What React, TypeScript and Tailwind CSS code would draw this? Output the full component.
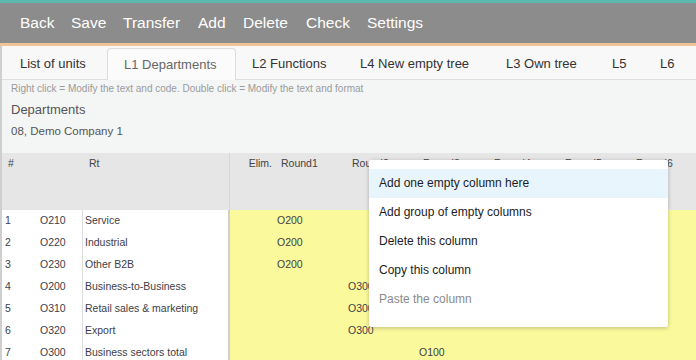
import React from "react";

const menu = [
  { label: "Back", w: "w-[51px]" },
  { label: "Save", w: "w-[52px]" },
  { label: "Transfer", w: "w-[75px]" },
  { label: "Add", w: "w-[45px]" },
  { label: "Delete", w: "w-[63px]" },
  { label: "Check", w: "w-[61px]" },
  { label: "Settings", w: "w-auto" },
];

const tabs = [
  { label: "List of units", w: "w-[103px]" },
  { label: "L1 Departments", w: "w-[129px]", active: true },
  { label: "L2 Functions", w: "w-[108px]" },
  { label: "L4 New empty tree", w: "w-[146px]" },
  { label: "L3 Own tree", w: "w-[106px]" },
  { label: "L5", w: "w-[48px]" },
  { label: "L6", w: "w-[48px]" },
];

const rows = [
  { n: 1, code: "O210", name: "Service", col: 0, val: "O200" },
  { n: 2, code: "O220", name: "Industrial", col: 0, val: "O200" },
  { n: 3, code: "O230", name: "Other B2B", col: 0, val: "O200" },
  { n: 4, code: "O200", name: "Business-to-Business", col: 1, val: "O300" },
  { n: 5, code: "O310", name: "Retail sales & marketing", col: 1, val: "O300" },
  { n: 6, code: "O320", name: "Export", col: 1, val: "O300" },
  { n: 7, code: "O300", name: "Business sectors total", col: 2, val: "O100" },
];

const rounds = ["Round1", "Round2", "Round3", "Round4", "Round5", "Round6"];

const contextItems = [
  { label: "Add one empty column here", active: true },
  { label: "Add group of empty columns" },
  { label: "Delete this column" },
  { label: "Copy this column" },
  { label: "Paste the column", disabled: true },
];

export default function App() {
  return (
    <div className="relative h-[360px] w-[696px] overflow-hidden bg-white font-['Liberation_Sans',Arial,sans-serif]">
      {/* Top toolbar */}
      <div className="h-[3px] bg-[#5cb8ae]" />
      <div className="flex h-[40px] items-center bg-[#8c8c8c] pl-5 text-[15.5px] text-white">
        {menu.map((m) => (
          <span key={m.label} className={m.w}>
            {m.label}
          </span>
        ))}
      </div>
      <div className="h-[3px] bg-[#f0c496]" />

      <div className="border-l-2 border-[#cfcfcf]">
        {/* Tabs */}
        <div className="flex h-[34px] items-end border-b border-[#dedede] bg-[#f8f8f8] pl-[2px] text-[13px]">
          {tabs.map((t) =>
            t.active ? (
              <div
                key={t.label}
                className={`${t.w} -mb-px flex h-[32px] shrink-0 items-center rounded-t-[4px] border border-b-0 border-[#dcdcdc] bg-[#fbfbfb] pl-4 text-[#666]`}
              >
                {t.label}
              </div>
            ) : (
              <div key={t.label} className={`${t.w} flex h-[31px] shrink-0 items-center pl-4 text-[#333]`}>
                {t.label}
              </div>
            )
          )}
        </div>

        {/* Info */}
        <div className="h-[73px] bg-[#f4f6f6] pl-[9px] pt-[3px] text-[#555]">
          <div className="h-[12px] text-[10px] leading-[12px] text-[#9a9a9a]">
            Right click = Modify the text and code. Double click = Modify the text and format
          </div>
          <div className="mt-[7px] h-[16px] text-[13px] leading-[16px]">Departments</div>
          <div className="mt-[6px] h-[14px] text-[11.5px] leading-[14px]">08, Demo Company 1</div>
        </div>

        {/* Table header */}
        <div className="flex h-[57px] bg-[#e6e6e6] text-[10.5px] leading-[14px] text-[#444]">
          <div className="flex w-[228px] shrink-0 border-r border-[#d6d6d6] pt-[3px]">
            <span className="w-[87px] pl-[6px]">#</span>
            <span>Rt</span>
          </div>
          <div className="flex shrink-0 pt-[3px]">
            <span className="w-[45px] pr-[3px] text-right">Elim.</span>
            {rounds.map((r) => (
              <span key={r} className="w-[71px] shrink-0 pl-[6px]">
                {r}
              </span>
            ))}
          </div>
        </div>

        {/* Rows */}
        {rows.map((r) => (
          <div key={r.n} className="flex h-[22px] text-[10.5px] text-[#404048]">
            <div className="flex w-[228px] shrink-0 border-r-2 border-[#d0d0d0] bg-white">
              <span className="flex w-[33px] items-center pl-[3px]">{r.n}</span>
              <span className="flex w-[47px] items-center pl-[5px]">{r.code}</span>
              <span className="flex flex-1 items-center border-l border-[#dddddd] pl-[2px]">
                {r.name}
              </span>
            </div>
            <div className="flex flex-1 bg-[#fafa9c]">
              <span className="w-[44px] shrink-0" />
              {rounds.map((c, i) => (
                <span key={c} className="flex w-[71px] shrink-0 items-center pl-[3px]">
                  {i === r.col ? r.val : ""}
                </span>
              ))}
            </div>
          </div>
        ))}
      </div>

      {/* Context menu */}
      <div className="absolute left-[369px] top-[160px] h-[167px] w-[299px] rounded-[2px] bg-white pt-[9px] text-[12px] shadow-[0_1px_4px_rgba(0,0,0,0.25)]">
        {contextItems.map((c) => (
          <div
            key={c.label}
            className={`flex h-[29px] items-center pb-[2px] pl-[10px] ${c.active ? "bg-[#e9f5fc]" : ""} ${
              c.disabled ? "text-[#8a8a8a]" : "text-[#1c1c24]"
            }`}
          >
            {c.label}
          </div>
        ))}
      </div>
    </div>
  );
}
